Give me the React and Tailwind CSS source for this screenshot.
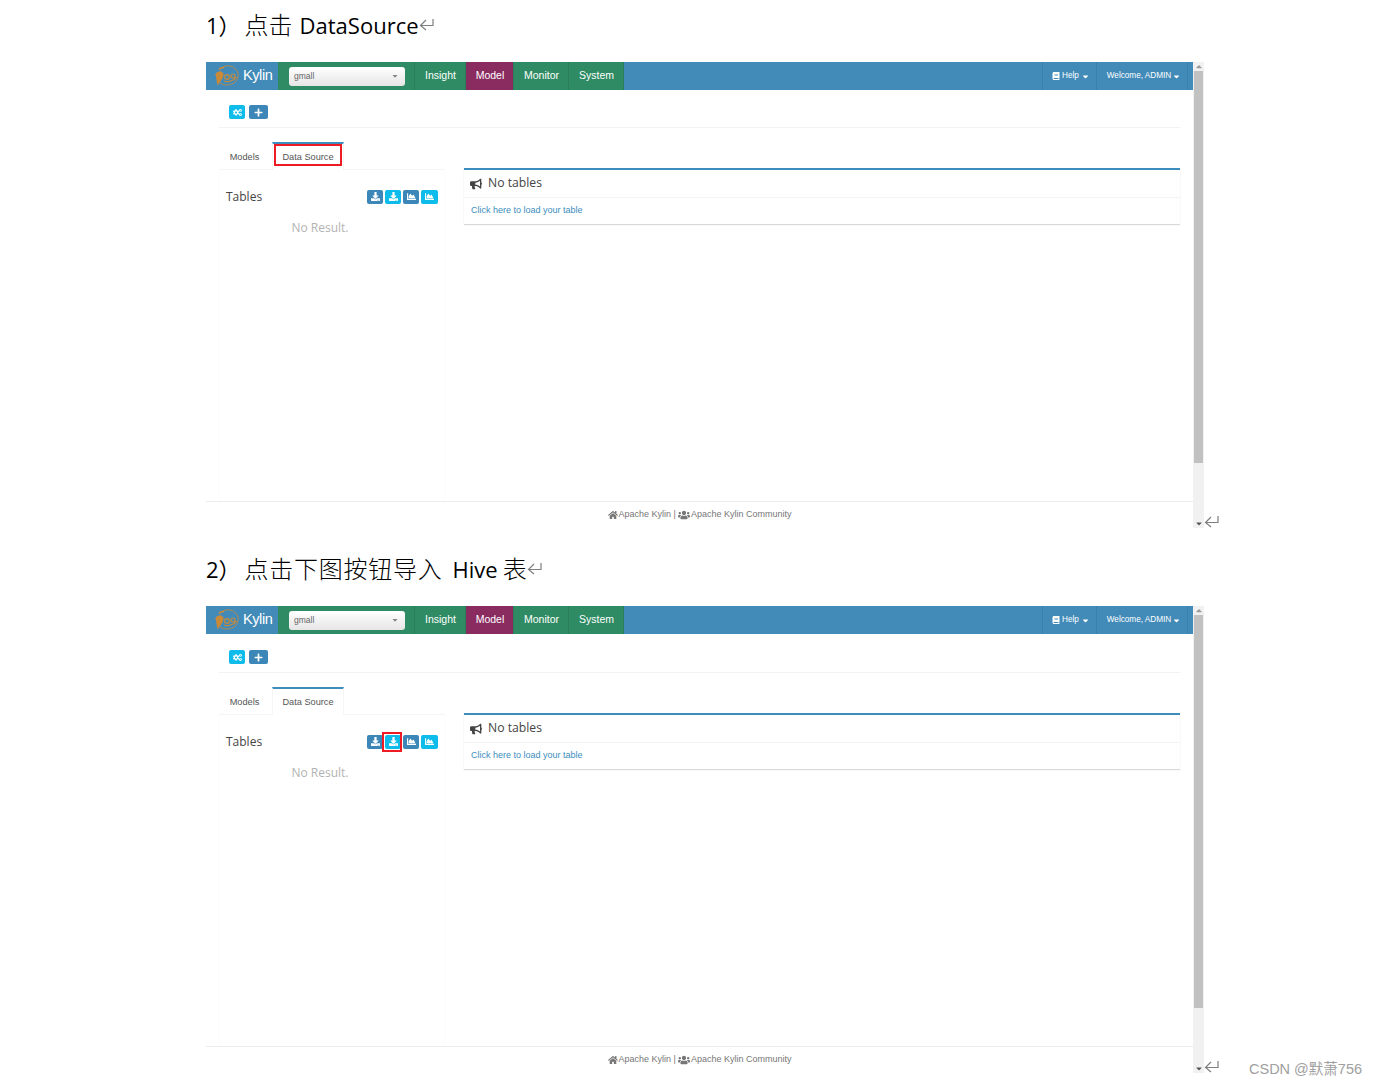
import React from "react";
import { FaCogs, FaPlus, FaDownload, FaChartArea, FaBullhorn, FaBook, FaHome, FaUsers, FaCaretDown, FaCaretUp } from "react-icons/fa";

function ReturnMark({ className }) {
  return (
    <svg viewBox="0 0 15 13" className={className} fill="none" stroke="#7f7f7f" strokeWidth="1.2">
      <path d="M14 1V7.5H1.5" />
      <path d="M7 2L1.5 7.5L7 12" />
    </svg>
  );
}

function KylinLogo() {
  return (
    <svg viewBox="0 0 26 24" className="h-[24px] w-[26px]" fill="none" stroke="#c98a3a" strokeWidth="1.2">
      <path d="M2 10C4 7 8 7 9 10C9 14 6 17 4 20C3 17 3 13 2 10Z" fill="#c98a3a" />
      <path d="M5 6C6 4 8 3 10 4" strokeWidth="1.6" />
      <path d="M9 3C15 0 22 3 24 9C25 16 20 21 13 21C10 21 8 20 6 19" strokeWidth="0.8" />
      <circle cx="13" cy="13" r="2.3" />
      <circle cx="19" cy="12" r="2" />
      <path d="M10 17C13 18 19 18 23 13" />
    </svg>
  );
}

function NavItem({ label, active }) {
  return (
    <div className={`flex h-full items-center justify-center border-r border-[#2a7f59] pb-px pl-px ${active ? "w-[48px] bg-[#8a2c5f]" : "bg-[#2e8b63]"} ${label === "Insight" ? "w-[51px]" : ""} ${label === "Monitor" || label === "System" ? "w-[55px]" : ""}`}>
      {label}
    </div>
  );
}

function IconBtn({ icon: Icon, dark, w = "w-[16px]" }) {
  return (
    <div className={`flex h-[14px] ${w} items-center justify-center rounded-[2px] text-white ${dark ? "bg-[#3d87b8]" : "bg-[#0dbcea]"}`}>
      <Icon className="text-[9px]" />
    </div>
  );
}

function Shot({ step }) {
  const first = step === 1;
  return (
    <div className="flex w-[998px] font-['Liberation_Sans',sans-serif]">
      <div className="flex w-[987px] flex-col">
        {/* Navbar */}
        <div className="flex h-[28px] items-stretch bg-[#428bb9] text-[10.5px] text-white">
          <div className="flex w-[72px] items-center gap-[3px] pl-[8px]">
            <KylinLogo />
            <span className="text-[14.5px] tracking-[-0.4px]">Kylin</span>
          </div>
          <div className="flex bg-[#2e8b63]">
            <div className="flex w-[137px] items-center border-r border-[#2a7f59] pl-[11px]">
              <div className="flex h-[19px] w-[116px] items-center justify-between rounded-[3px] bg-gradient-to-b from-white to-[#e6e6e6] pl-[5px] pr-[6px] text-[8.5px] text-[#666666]">
                <span className="pt-px">gmall</span>
                <FaCaretDown className="text-[8px] text-[#888888]" />
              </div>
            </div>
            <NavItem label="Insight" />
            <NavItem label="Model" active />
            <NavItem label="Monitor" />
            <NavItem label="System" />
          </div>
          <div className="ml-auto flex pr-[5px] text-[8.2px]">
            <div className="flex w-[55px] items-center justify-center gap-[2px] border-x border-[#3b7fab] pl-[3px]">
              <FaBook className="text-[8px]" />
              <span>Help</span>
              <FaCaretDown className="text-[9px]" />
            </div>
            <div className="flex w-[91px] items-center justify-center gap-[1px] border-r border-[#3b7fab] pl-[4px]">
              <span>Welcome, ADMIN</span>
              <FaCaretDown className="text-[9px]" />
            </div>
          </div>
        </div>

        <div className="ml-[13px] mr-[13px] flex flex-col">
          {/* Toolbar */}
          <div className={`flex gap-[4px] border-b border-[#f3f3f3] pl-[10px] ${first ? "h-[38px] pt-[15px]" : "h-[39px] pt-[16px]"}`}>
            <IconBtn icon={FaCogs} />
            <IconBtn icon={FaPlus} dark w="w-[19px]" />
          </div>

          <div className="flex h-[373px]">
            {/* Left column */}
            <div className="flex w-[226px] flex-col pt-[14px]">
              <div className="flex h-[28px] border-b border-[#f5f5f5] text-[9.2px] text-[#555555]">
                <div className="flex w-[53px] items-center justify-center pr-[2px] pt-[5px]">Models</div>
                <div className="relative flex h-[28px] w-[72px] items-center justify-center border-t-2 border-x border-[#3c8dbc] border-x-[#f5f5f5] bg-white pt-px">
                  Data Source
                  {first && <div className="absolute left-[1px] top-[0px] h-[22px] w-[68px] border-2 border-[#ed1c24]" />}
                </div>
              </div>
              <div className="flex flex-1 flex-col border-x border-[#fbfbfb] pl-[6px] pr-[6px]">
                <div className="mt-[18px] flex items-center justify-between">
                  <span className="font-['Open_Sans',sans-serif] text-[12px] text-[#444444]">Tables</span>
                  <div className="-mt-px flex gap-[2px]">
                    <IconBtn icon={FaDownload} dark />
                    <div className="relative">
                      <IconBtn icon={FaDownload} />
                      {!first && <div className="absolute -left-[3px] -top-[3px] h-[20px] w-[20px] border-2 border-[#ed1c24]" />}
                    </div>
                    <IconBtn icon={FaChartArea} dark />
                    <IconBtn icon={FaChartArea} w="w-[17px]" />
                  </div>
                </div>
                <div className="mt-[13px] pr-[24px] text-center font-['Open_Sans',sans-serif] text-[12px] text-[#b3b3b3]">No Result.</div>
              </div>
            </div>

            {/* Right panel */}
            <div className="ml-[19px] mt-[40px] flex h-[56px] w-[716px] flex-col border-t-2 border-[#3c8dbc] bg-white shadow-[0_1px_1px_rgba(0,0,0,0.15)]">
              <div className="flex h-[28px] items-center gap-[6px] border-b border-[#f4f4f4] pl-[6px] font-['Open_Sans',sans-serif] text-[12.2px] text-[#444444]">
                <FaBullhorn className="text-[12px]" />
                <span>No tables</span>
              </div>
              <div className="flex flex-1 items-center pl-[7px] text-[9px] text-[#3c8dbc]">Click here to load your table</div>
            </div>
          </div>
        </div>

        {/* Footer */}
        <div className="flex h-[27px] items-center justify-center gap-[1px] border-t border-[#ececec] text-[9px] text-[#777777]">
          <FaHome className="text-[10px]" />
          <span>Apache Kylin |</span>
          <FaUsers className="ml-[1px] text-[12px]" />
          <span>Apache Kylin Community</span>
        </div>
      </div>

      {/* Scrollbar */}
      <div className="flex w-[11px] flex-col items-center bg-[#f1f1f1] text-[#555555]">
        <FaCaretUp className="h-[9px] text-[6px] text-[#999999]" />
        <div className={`w-[9px] bg-[#c1c1c1] ${first ? "h-[392px]" : "h-[393px]"}`} />
        <FaCaretDown className="mt-auto h-[9px] text-[6px]" />
      </div>
    </div>
  );
}

export default function App() {
  return (
    <div className="h-[1086px] w-[1376px] overflow-hidden bg-white pl-[206px] text-black">
      <div className="flex h-[62px] items-start pt-[8px] font-['Open_Sans','Noto_Sans_CJK_SC',sans-serif] text-[22px] leading-[34px]">
        <span>1）</span>
        <span className="ml-[4px] text-[24px] font-light">点击</span>
        <span className="ml-[7px]">DataSource</span>
        <ReturnMark className="mt-[10px] h-[13px] w-[15px]" />
      </div>
      <div className="flex items-end">
        <Shot step={1} />
        <ReturnMark className="h-[13px] w-[15px]" />
      </div>
      <div className="flex h-[78px] items-start pt-[24px] font-['Open_Sans','Noto_Sans_CJK_SC',sans-serif] text-[22px] leading-[34px]">
        <span>2）</span>
        <span className="ml-[4px] text-[24px] font-light tracking-[0.75px]">点击下图按钮导入</span>
        <span className="ml-[10px]">Hive</span>
        <span className="ml-[5px] text-[24px] font-light">表</span>
        <ReturnMark className="mt-[10px] h-[13px] w-[15px]" />
      </div>
      <div className="flex items-end">
        <Shot step={2} />
        <ReturnMark className="h-[13px] w-[15px]" />
        <span className="-mb-[5px] ml-[30px] font-['Liberation_Sans','Noto_Sans_CJK_SC',sans-serif] text-[14.5px] leading-[18px] text-[#a0a0a0]">CSDN @默萧756</span>
      </div>
    </div>
  );
}
